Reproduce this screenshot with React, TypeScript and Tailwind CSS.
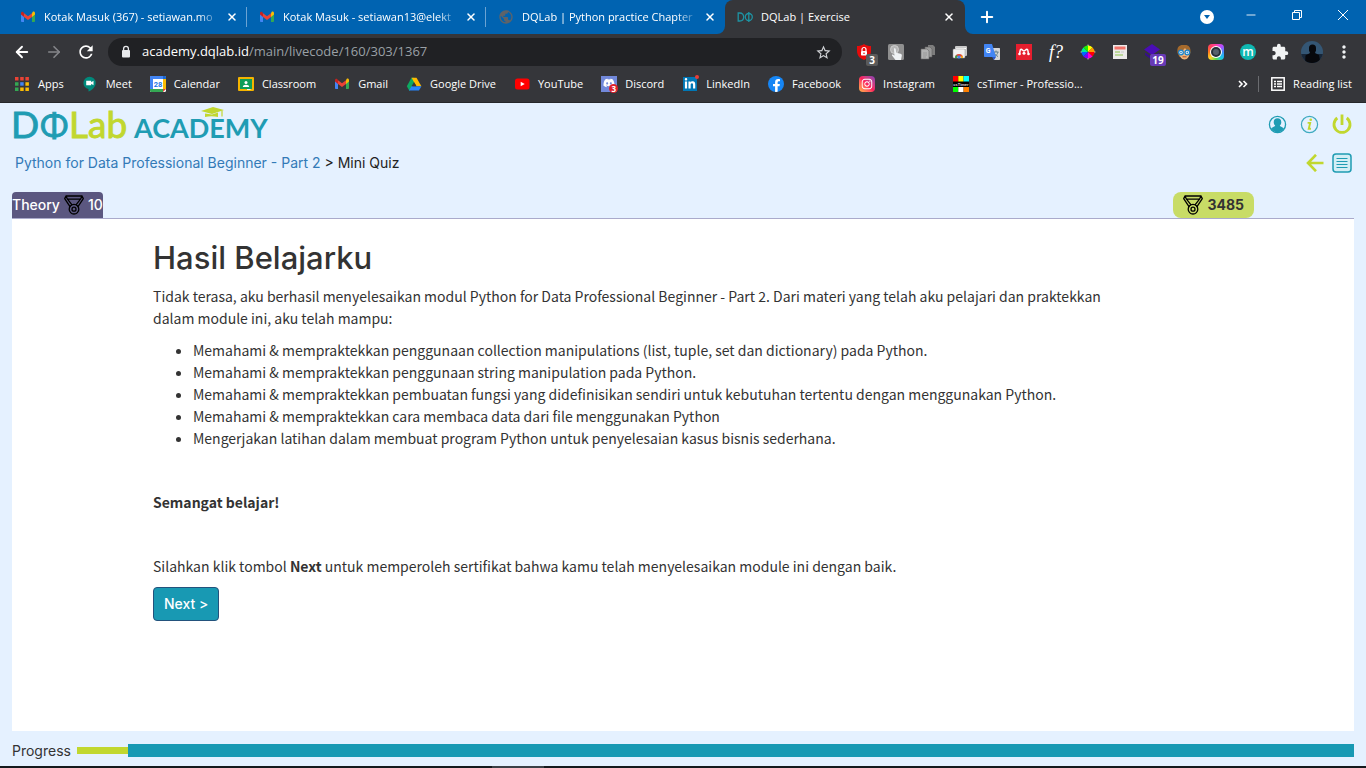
import React from "react";
import { ArrowLeft, ArrowRight, Minus, Plus, X } from "lucide-react";
import { MdExtension, MdMoreVert, MdOutlineStarBorder, MdRefresh, MdPublic } from "react-icons/md";
import { FaFacebookF, FaDiscord, FaLinkedinIn, FaInstagram } from "react-icons/fa";

type IconProps = { className?: string };

const GmailIcon = ({ className = "size-4" }: IconProps) => (
  <svg viewBox="0 0 16 16" className={className} aria-hidden="true">
    <path d="M1 4v8.2c0 .5.4.8.8.8H4V6.500z" fill="#4285f4" />
    <path d="M12 6.500V13h2.200c.4 0 .8-.3.800-.8V4z" fill="#34a853" />
    <path d="M12 4.200V7.900l3-2.300V4.200c0-1.500-1.600-2-2.400-1.200z" fill="#fbbc04" />
    <path d="M4 4.200v3.700L8 11l4-3.100V4.200L8 7.200z" fill="#ea4335" />
    <path d="M1 4.200v1.400l3 2.300V4.200L3.400 3.200C2.200 2.300 1 3 1 4.200z" fill="#c5221f" />
  </svg>
);

const AppsIcon = () => (
  <svg viewBox="0 0 16 16" className="size-4" aria-hidden="true">
    <path d="M1 1h3.500v3.500H1zM6.200 1h3.500v3.500H6.200zM11.400 1h3.500v3.500h-3.500z" fill="#ea4335" />
    <path d="M1 6.200h3.500v3.500H1zM1 11.400h3.500v3.500H1z" fill="#34a853" />
    <path d="M6.200 6.200h3.500v3.500H6.200z" fill="#4285f4" />
    <path d="M11.400 6.200h3.500v3.500h-3.500zM6.200 11.400h3.500v3.500H6.200zM11.400 11.400h3.500v3.500h-3.500z" fill="#fbbc04" />
  </svg>
);

const MeetIcon = () => (
  <svg viewBox="0 0 16 16" className="size-4" aria-hidden="true">
    <path d="M7.500.8a6.200 6.200 0 0 0-1 12.300V15.500c3.500-1.300 7.200-4.600 7.200-8.500A6.200 6.200 0 0 0 7.500.8z" fill="#00897b" />
    <path d="M4.200 4.700h5v1.600l2.300-1.600v4.600L9.200 7.700v1.600h-5z" fill="#fff" />
  </svg>
);

const CalendarIcon = () => (
  <svg viewBox="0 0 16 16" className="size-4" aria-hidden="true">
    <rect width="16" height="16" rx="1.500" fill="#fff" />
    <path d="M0 3V1.200C0 .5.500 0 1.200 0H13v3z" fill="#4285f4" />
    <path d="M0 3h3v10H0z" fill="#4285f4" />
    <path d="M13 0h1.800c.7 0 1.200.5 1.200 1.200V3h-3z" fill="#1967d2" />
    <path d="M13 3h3v10h-3z" fill="#fbbc04" />
    <path d="M0 13h13v3H1.200C.5 16 0 15.500 0 14.800z" fill="#34a853" />
    <path d="M13 13h3l-3 3z" fill="#ea4335" />
    <text x="8" y="10.800" textAnchor="middle" fontSize="7.500" fontWeight="700" fontFamily="Roboto, sans-serif" fill="#1a73e8">28</text>
  </svg>
);

const ClassroomIcon = () => (
  <svg viewBox="0 0 16 16" className="size-4" aria-hidden="true">
    <rect y="1" width="16" height="14" rx="1" fill="#f4b400" />
    <rect x="2" y="3" width="12" height="10" fill="#0f9d58" />
    <circle cx="8" cy="6.400" r="1.500" fill="#fff" />
    <path d="M4.800 11c0-1.500 1.500-2.300 3.200-2.300s3.200.8 3.200 2.300z" fill="#fff" />
    <path d="M9 13h3.500v1H9z" fill="#f1f1f1" />
  </svg>
);

const DriveIcon = () => (
  <svg viewBox="0 0 16 16" className="size-4" aria-hidden="true">
    <path d="M5.500 1.800h2.500l2.200 3.700L3.500 15 .8 10.300z" fill="#0da960" />
    <path d="M5.500 1.800h5l4.900 8.500h-5z" fill="#ffba00" />
    <path d="M5.500 10.300h9.900L13 14.600H3z" fill="#2684fc" />
    <path d="M8 6.100 5.500 10.300h5z" fill="#35363a" />
  </svg>
);

const YoutubeIcon = () => (
  <svg viewBox="0 0 16 16" className="size-4" aria-hidden="true">
    <rect x="1" y="2.500" width="14.500" height="11" rx="2.500" fill="#f00" />
    <path d="M6.700 5.700v4.600l4-2.300z" fill="#fff" />
  </svg>
);

const DiscordIcon = () => (
  <span className="relative flex size-4 items-start justify-center bg-[#7289da] pt-px text-white">
    <FaDiscord size={12} />
    <span className="absolute -bottom-px -right-px flex size-[9px] items-center justify-center rounded-full bg-[#e0202c] text-[8px] font-bold leading-none">3</span>
  </span>
);

const LinkedinIcon = () => (
  <span className="relative flex size-4 items-center justify-center">
    <span className="flex size-3.5 items-center justify-center bg-[#0077b5] text-white">
      <FaLinkedinIn size={12} />
    </span>
    <span className="absolute -right-px -top-px size-1 rounded-full bg-[#e83e37]" />
  </span>
);

const FacebookIcon = () => (
  <span className="flex size-4 items-end justify-center overflow-hidden rounded-full bg-[#1686f5] text-white">
    <FaFacebookF size={13} />
  </span>
);

const InstagramIcon = () => (
  <span className="flex size-4 items-center justify-center rounded bg-linear-to-tr from-[#fcb045] via-[#fd1d5d] to-[#833ab4] text-white">
    <FaInstagram size={12} />
  </span>
);

const TimerIcon = () => (
  <svg viewBox="0 0 16 16" className="size-4" aria-hidden="true">
    <rect width="16" height="16" fill="#000" />
    <rect width="5.300" height="5.500" fill="#f00" />
    <rect x="5.300" width="5.300" height="5.500" fill="#ff0" />
    <rect x="10.600" width="5.400" height="5.500" fill="#0ff" />
    <rect y="11" width="5.300" height="5" fill="#0f0" />
    <rect x="5.300" y="11" width="5.300" height="5" fill="#fff" />
    <rect x="10.600" y="11" width="5.400" height="5" fill="#ff8000" />
    <text x="8" y="9.800" textAnchor="middle" fontSize="4" fontWeight="700" fontFamily="Liberation Sans, sans-serif" fill="#ddd">csTimer</text>
  </svg>
);

const DqIcon = () => (
  <svg viewBox="0 0 16 16" className="size-4" fill="none" stroke="#1e93a3" strokeWidth="1.300" aria-hidden="true">
    <path d="M1.200 4v8h1.500c5.300 0 5.300-8 0-8z" />
    <circle cx="11.800" cy="8" r="3.500" />
    <path d="M11.800 3v10" />
  </svg>
);

const bookmarks: { label: string; icon: React.ReactNode }[] = [
  { label: "Apps", icon: <AppsIcon /> },
  { label: "Meet", icon: <MeetIcon /> },
  { label: "Calendar", icon: <CalendarIcon /> },
  { label: "Classroom", icon: <ClassroomIcon /> },
  { label: "Gmail", icon: <GmailIcon /> },
  { label: "Google Drive", icon: <DriveIcon /> },
  { label: "YouTube", icon: <YoutubeIcon /> },
  { label: "Discord", icon: <DiscordIcon /> },
  { label: "LinkedIn", icon: <LinkedinIcon /> },
  { label: "Facebook", icon: <FacebookIcon /> },
  { label: "Instagram", icon: <InstagramIcon /> },
  { label: "csTimer - Professio...", icon: <TimerIcon /> },
];

const extensions: { name: string; icon: React.ReactNode }[] = [
  {
    name: "Ad blocker",
    icon: (
      <span className="relative block size-4">
        <svg viewBox="0 0 16 16" className="size-4" aria-hidden="true">
          <path d="M8 0c2 1.500 4.500 2 7 2v5c0 4.500-3 7.500-7 9-4-1.500-7-4.500-7-9V2c2.500 0 5-.5 7-2z" fill="#e60b0b" />
          <rect x="5" y="7" width="6" height="4.500" rx=".8" fill="#fff" />
          <path d="M6 7V5.500a2 2 0 0 1 4 0V7" fill="none" stroke="#fff" strokeWidth="1.200" />
          <circle cx="8" cy="9.200" r=".8" fill="#e60b0b" />
        </svg>
        <span className="absolute left-2.5 top-2.5 flex h-3 w-3 items-center justify-center rounded-xs bg-[#5a5a5a] text-[10px] font-bold leading-none text-white">3</span>
      </span>
    ),
  },
  {
    name: "Click helper",
    icon: (
      <svg viewBox="0 0 16 16" className="size-4" aria-hidden="true">
        <rect width="16" height="16" rx="1.500" fill="#8f8f8f" />
        <circle cx="6.500" cy="5.500" r="4" fill="#b5b5b5" stroke="#cecece" />
        <path d="M6 4.500c1-.8 1.700 0 1.800 1l.3 3.300 4.400 1c1 .2 1.500 1 1.300 2L13 16H7.500L4 11.500c-.3-1 .8-1.300 1.600-.6l.8.8z" fill="#f0f3f5" />
      </svg>
    ),
  },
  {
    name: "Copy tabs",
    icon: (
      <svg viewBox="0 0 16 16" className="size-4" aria-hidden="true">
        <path d="M8 1h5l2 2v8H8z" fill="#7d7d7d" />
        <path d="M5 3h5l2 2v8H5z" fill="#9a9a9a" stroke="#626262" strokeWidth=".6" />
        <path d="M1 5h6l2 2v8H1z" fill="#b3b3b3" stroke="#666" strokeWidth=".6" />
        <path d="M3 9h4M3 11h4M3 13h3" stroke="#999" />
      </svg>
    ),
  },
  {
    name: "Tab windows",
    icon: (
      <svg viewBox="0 0 16 16" className="size-4" aria-hidden="true">
        <rect x="3" y="2" width="12" height="10" rx="1" fill="#c9c9c9" />
        <rect x="4" y="4" width="10" height="1" fill="#fff" />
        <rect x="1" y="5" width="12" height="9" rx="1" fill="#f2f2f2" stroke="#999" strokeWidth=".5" />
        <path d="M3 14a4 4 0 0 1 8 0H9a2 2 0 0 0-4 0z" fill="#de4535" />
        <path d="M3 14c0-1.500.6-2.500 1.400-3l1.200 1.500L5 14z" fill="#33a14c" />
        <path d="M9.700 11.200c.8.700 1.300 1.600 1.300 2.800H9z" fill="#f7bd16" />
        <circle cx="7" cy="13" r="1.500" fill="#4285f4" />
      </svg>
    ),
  },
  {
    name: "Translate",
    icon: (
      <svg viewBox="0 0 16 16" className="size-4" aria-hidden="true">
        <path d="M6 4h9c.6 0 1 .4 1 1v10c0 .6-.4 1-1 1h-5z" fill="#d6d6d6" />
        <path d="M9 8h5.500M12 6.500V8M10 8c.5 2 2 3.500 4 4.500M14 8c-.5 2-2 3.800-3.500 4.500" stroke="#607d8b" fill="none" />
        <path d="M1 0h7l4 13H1c-.6 0-1-.4-1-1V1c0-.6.400-1 1-1z" fill="#4285f4" />
        <path d="m8 13 4 0-2 3z" fill="#2a56c6" />
        <text x="1.800" y="9" fontSize="7" fontWeight="700" fontFamily="Roboto, sans-serif" fill="#fff">G</text>
      </svg>
    ),
  },
  {
    name: "Mendeley",
    icon: (
      <svg viewBox="0 0 16 16" className="size-4" aria-hidden="true">
        <rect width="16" height="16" fill="#e61e2e" />
        <path d="M3.500 9.500C4.300 8 3.600 5.500 5 5.300c1.300-.1 1.500 1.700 3 1.700s1.700-1.800 3-1.700c1.400.2.7 2.700 1.500 4.200" fill="none" stroke="#fff" strokeWidth="1.500" />
        <circle cx="3.500" cy="10" r="1.300" fill="#fff" />
        <circle cx="8" cy="9.200" r="1.500" fill="#fff" />
        <circle cx="12.500" cy="10" r="1.300" fill="#fff" />
      </svg>
    ),
  },
  { name: "Font finder", icon: <span className="font-['Liberation_Serif',serif] text-lg italic leading-none text-white">f?</span> },
  {
    name: "Color picker",
    icon: (
      <svg viewBox="0 0 16 16" className="size-4" aria-hidden="true">
        <path d="M8 0 10 3H6zM8 16l2-3H6zM0 8l3-2v4zM16 8l-3-2v4z" fill="#999" />
        <path d="M8 8V1.500a6.500 6.500 0 0 1 4.600 1.900z" fill="#ff0" />
        <path d="m8 8 4.600-4.600A6.500 6.500 0 0 1 14.500 8z" fill="#f90" />
        <path d="M8 8h6.500a6.500 6.500 0 0 1-1.900 4.600z" fill="#f00" />
        <path d="m8 8 4.600 4.600A6.500 6.500 0 0 1 8 14.500z" fill="#f0c" />
        <path d="M8 8v6.500a6.500 6.500 0 0 1-4.600-1.900z" fill="#70f" />
        <path d="m8 8-4.600 4.600A6.500 6.500 0 0 1 1.500 8z" fill="#06f" />
        <path d="M8 8H1.500a6.500 6.500 0 0 1 1.900-4.600z" fill="#0e9" />
        <path d="M8 8 3.400 3.400A6.500 6.500 0 0 1 8 1.500z" fill="#2e0" />
      </svg>
    ),
  },
  {
    name: "Notes",
    icon: (
      <svg viewBox="0 0 16 16" className="size-4" aria-hidden="true">
        <rect x="1" y="1" width="14" height="14" fill="#eceaea" />
        <path d="M2.500 2.500h11v3h-11z" fill="#f2736b" />
        <path d="M3 8h5M3 11h8" stroke="#8bc34a" strokeWidth="1.200" />
        <path d="M9 8h3" stroke="#cfcfcf" strokeWidth="1.200" />
      </svg>
    ),
  },
  {
    name: "Layers",
    icon: (
      <span className="relative block size-4">
        <svg viewBox="0 0 16 16" className="size-4" aria-hidden="true">
          <path d="m8 0 8 5.500L8 11 0 5.500z" fill="#4a0db5" />
          <path d="M1 8.500 8 13l7-4.500V11l-7 5-7-5z" fill="#35108a" />
        </svg>
        <span className="absolute left-1.5 top-2.5 flex h-3 w-4 items-center justify-center rounded-xs bg-[#673ab7] text-[10px] font-bold leading-none text-white">19</span>
      </span>
    ),
  },
  {
    name: "Face",
    icon: (
      <svg viewBox="0 0 16 16" className="size-4" aria-hidden="true">
        <path d="M1.500 9C.5 2 4 .5 8 1c4.500-.5 7 2 6.500 8l-2 4h-9z" fill="#a56a2c" />
        <path d="M3 7c3 0 5-1 6-3 1 2 3 3 4.500 3 .5 5.500-2 8.500-5 8.500S3 12.500 3 7z" fill="#f0b57a" />
        <circle cx="5" cy="8.500" r="2.300" fill="#fff" stroke="#1683cf" strokeWidth="1.300" />
        <circle cx="11.300" cy="8.500" r="2.300" fill="#fff" stroke="#1683cf" strokeWidth="1.300" />
        <circle cx="5" cy="8.500" r=".9" fill="#2b86c5" />
        <circle cx="11.300" cy="8.500" r=".9" fill="#2b86c5" />
        <path d="M6.500 12.800h4" stroke="#a34b2d" />
      </svg>
    ),
  },
  {
    name: "Camera",
    icon: (
      <span className="flex size-4 items-center justify-center rounded-sm bg-[conic-gradient(#ff3ea5,#b44cff,#3f8cff,#19c8e8,#57dc4b,#ffd42a,#ff7a1a,#ff3e5f,#ff3ea5)]">
        <span className="flex size-3 items-center justify-center rounded-full bg-white">
          <span className="size-2.5 rounded-full border-2 border-[#26303a] bg-[#56616c]" />
        </span>
      </span>
    ),
  },
  { name: "Momentum", icon: <span className="flex size-4 items-center justify-center rounded-full bg-[#0fb8b2] pb-px text-xs font-semibold leading-none text-white">m</span> },
  { name: "Extensions", icon: <MdExtension size={18} color="#f1f3f4" /> },
  {
    name: "Profile",
    icon: (
      <svg viewBox="0 0 22 22" className="size-[22px] rounded-full" aria-hidden="true">
        <rect width="22" height="22" fill="#345674" />
        <path d="M0 13h22v9H0z" fill="#172638" />
        <path d="M8 7a3.500 3.500 0 0 1 7 0v2.500l-1 2.500 4 2 1.500 8H4l.5-7.500L9 12 8 9.500z" fill="#07080c" />
      </svg>
    ),
  },
  { name: "Menu", icon: <MdMoreVert size={20} color="#f1f3f4" /> },
];

const tabs: { title: string; icon: React.ReactNode; divider: boolean }[] = [
  { title: "Kotak Masuk (367) - setiawan.mo", icon: <GmailIcon />, divider: true },
  { title: "Kotak Masuk - setiawan13@elekt", icon: <GmailIcon />, divider: true },
  { title: "DQLab | Python practice Chapter", icon: <MdPublic size={16} color="#5f6368" />, divider: false },
];

function BrowserTabs() {
  return (
    <div className="flex h-[34px] bg-[#0063b1] pl-2 text-[11px] text-white">
      {tabs.map((tab) => (
        <div key={tab.title} className="flex w-[239px] items-center">
          <div className="flex min-w-0 flex-1 items-center gap-2 pl-3">
            <span className="shrink-0">{tab.icon}</span>
            <span className="flex-1 overflow-hidden whitespace-nowrap [mask-image:linear-gradient(to_right,black_88%,transparent)]">{tab.title}</span>
          </div>
          <button aria-label="Close tab" className="ml-1 mr-1.5 flex size-4 items-center justify-center">
            <X size={12} strokeWidth={3} />
          </button>
          <span className={tab.divider ? "h-5 w-px bg-[#6ba3d3]" : "h-5 w-px"} />
        </div>
      ))}
      <div className="relative flex w-60 items-center rounded-t-lg bg-[#35363a]">
        <svg viewBox="0 0 8 8" className="absolute -left-2 bottom-0 size-2" aria-hidden="true"><path d="M8 0v8H0a8 8 0 0 0 8-8z" fill="#35363a" /></svg>
        <svg viewBox="0 0 8 8" className="absolute -right-2 bottom-0 size-2" aria-hidden="true"><path d="M0 0v8h8a8 8 0 0 1-8-8z" fill="#35363a" /></svg>
        <div className="flex flex-1 items-center gap-2 pl-3">
          <DqIcon />
          <span>DQLab | Exercise</span>
        </div>
        <button aria-label="Close tab" className="mr-2 flex size-4 items-center justify-center">
          <X size={12} strokeWidth={3} />
        </button>
      </div>
      <button aria-label="New tab" className="ml-3 flex w-5 items-center justify-center">
        <Plus size={18} strokeWidth={2.6} />
      </button>
      <div className="ml-auto flex">
        <button aria-label="Search tabs" className="flex w-[42px] items-center justify-center">
          <span className="flex size-3.5 items-center justify-center rounded-full bg-white">
            <svg viewBox="0 0 6 4" className="h-1 w-1.5" aria-hidden="true"><path d="M0 0h6L3 4z" fill="#0063b1" /></svg>
          </span>
        </button>
        <button aria-label="Minimize" className="flex h-[30px] w-[46px] items-center justify-center">
          <Minus size={14} strokeWidth={1.5} />
        </button>
        <button aria-label="Restore" className="flex h-[30px] w-[46px] items-center justify-center">
          <svg viewBox="0 0 10 10" className="size-2.5" fill="none" stroke="currentColor" aria-hidden="true"><path d="M.5 2.500h7v7h-7zM2.500 2.500v-2h7v7h-2" /></svg>
        </button>
        <button aria-label="Close window" className="flex h-[30px] w-[46px] items-center justify-center">
          <svg viewBox="0 0 10 10" className="size-2.5" stroke="currentColor" aria-hidden="true"><path d="m0 0 10 10M10 0 0 10" /></svg>
        </button>
      </div>
    </div>
  );
}

function BrowserToolbar() {
  return (
    <div className="flex h-9 items-center bg-[#35363a] px-1.5 text-white">
      <button aria-label="Back" className="flex w-8 justify-center"><ArrowLeft size={18} strokeWidth={2.5} /></button>
      <button aria-label="Forward" className="flex w-8 justify-center text-[#85868a]"><ArrowRight size={18} strokeWidth={2.2} /></button>
      <button aria-label="Reload" className="flex w-8 justify-center"><MdRefresh size={20} /></button>
      <div className="mx-1.5 flex h-7 flex-1 items-center rounded-full bg-[#202124] pl-2.5 pr-2.5 text-[13px]">
        <svg viewBox="0 0 16 16" className="size-4" aria-hidden="true">
          <rect x="4" y="6" width="8" height="7.500" rx="1" fill="#e8eaed" />
          <path d="M5.600 6.500V4.800a2.400 2.400 0 0 1 4.800 0v1.700" fill="none" stroke="#e8eaed" strokeWidth="1.300" />
        </svg>
        <a href="#address" className="ml-2 flex-1 text-white">
          academy.dqlab.id<span className="text-[#9aa0a6]">/main/livecode/160/303/1367</span>
        </a>
        <MdOutlineStarBorder size={17} color="#d0d2d5" />
      </div>
      {extensions.map((ext) => (
        <button key={ext.name} aria-label={ext.name} className="flex w-8 shrink-0 items-center justify-center">{ext.icon}</button>
      ))}
    </div>
  );
}

function BookmarksBar() {
  return (
    <nav aria-label="Bookmarks" className="flex h-[33px] items-center border-b border-[#26272a] bg-[#35363a] pb-1 pl-3.5 pr-3.5 text-[11px] text-white">
      <div className="flex flex-1 items-center gap-[18px] whitespace-nowrap">
        {bookmarks.map((b) => (
          <a key={b.label} href="#bookmark" className="flex items-center gap-2">
            <span className="shrink-0">{b.icon}</span>
            {b.label}
          </a>
        ))}
      </div>
      <button aria-label="More bookmarks" className="mr-2.5 flex">
        <svg viewBox="0 0 10 8" className="h-2 w-2.5" fill="none" stroke="#fff" strokeWidth="1.600" aria-hidden="true"><path d="m1 1 3 3-3 3M5.500 1l3 3-3 3" /></svg>
      </button>
      <span className="h-4 w-px bg-[#6b6c70]" />
      <button className="ml-3 flex items-center gap-2 whitespace-nowrap">
        <svg viewBox="0 0 14 14" className="size-3.5" fill="none" stroke="#fff" aria-hidden="true">
          <rect x=".8" y=".8" width="12.400" height="12.400" strokeWidth="1.500" />
          <path d="M3 4.500h2M6 4.500h5M3 7h2M6 7h5M3 9.500h2M6 9.500h5" strokeWidth="1.300" />
        </svg>
        Reading list
      </button>
    </nav>
  );
}

const Medal = () => (
  <svg viewBox="0 0 20 20" className="size-5" fill="none" stroke="#000" strokeWidth="1.300" strokeLinejoin="round" strokeLinecap="round" aria-hidden="true">
    <path d="M2 1h16l-1.500 3.200h-13zM2 1 .7 3.600l5.300 8M18 1l1.300 2.600-5.300 8M3.500 4.200l4.300 5.400M16.500 4.200l-4.300 5.400" />
    <circle cx="10" cy="14.200" r="4.800" />
    <circle cx="10" cy="14.200" r="2" />
  </svg>
);

const Logo = () => (
  <svg viewBox="0 0 260 36" className="h-9 w-[260px] overflow-visible" role="img" aria-label="DQLab Academy" fontFamily="Lato, sans-serif">
    <text x="-1" y="32" fontSize="37" fill="#1f9cb3" stroke="#1f9cb3" strokeWidth=".9">
      D<tspan fontFamily="Inter, sans-serif" fontSize="34">Φ</tspan><tspan fill="#c1d72f" stroke="#c1d72f">Lab</tspan>
    </text>
    <text x="122" y="32" fontSize="27" fontWeight="700" fill="#1f9cb3">ACADEMY</text>
    <path d="m189 5 12-4 11 3-12 4z" fill="#c1d72f" />
    <path d="M193 7.500v3.500c4-1 9-1 13 0V6.500l-6 2z" fill="#c1d72f" />
    <path d="M210 4.500v6" stroke="#c1d72f" strokeWidth="1.200" />
  </svg>
);

function PageHeader() {
  return (
    <header className="pl-3 pr-3.5">
      <div className="flex h-[42px] items-center justify-between">
        <a href="#home"><Logo /></a>
        <div className="flex items-center gap-[13px]">
          <button aria-label="Profile">
            <svg viewBox="0 0 20 20" className="size-[19px]" aria-hidden="true">
              <circle cx="10" cy="10" r="8.500" fill="none" stroke="#1f9cb3" strokeWidth="1.400" />
              <path d="M10 3.500c-2.500 0-4 1.700-4 4 0 1.600.7 2.900 1.600 3.600-.2 1.200-2.600 1.400-4.300 2.900A8.500 8.500 0 0 0 10 18.500a8.500 8.500 0 0 0 6.700-4.500c-1.700-1.500-4.100-1.700-4.300-2.900.9-.7 1.600-2 1.600-3.600 0-2.300-1.500-4-4-4z" fill="#1f9cb3" />
            </svg>
          </button>
          <button aria-label="Information">
            <svg viewBox="0 0 20 20" className="size-[19px]" fill="none" aria-hidden="true">
              <circle cx="10" cy="10" r="8.500" stroke="#3fabc0" strokeWidth="1.300" />
              <circle cx="11.300" cy="5" r="1.400" fill="#c1d72f" />
              <path d="M8 8.300h2.700L9.200 14.500h2.300" stroke="#c1d72f" strokeWidth="2" />
            </svg>
          </button>
          <button aria-label="Log out">
            <svg viewBox="0 0 20 20" className="size-5" fill="none" stroke="#c1d72f" strokeWidth="2.800" aria-hidden="true">
              <path d="M10 .5V11M5.300 4A8 8 0 1 0 14.700 4" />
            </svg>
          </button>
        </div>
      </div>
      <div className="flex h-9 items-center justify-between">
        <div className="pl-[3px] text-sm">
          <a href="#module" className="text-[#337ab7]">Python for Data Professional Beginner - Part 2</a>
          <span className="text-[#222]"> &gt; Mini Quiz</span>
        </div>
        <div className="flex items-center gap-2">
          <button aria-label="Previous page">
            <svg viewBox="0 0 18 18" className="size-[18px]" fill="none" stroke="#c1d72f" strokeWidth="2.600" aria-hidden="true">
              <path d="M10 .8 2 9l8 8.200M2 9h15.500" />
            </svg>
          </button>
          <button aria-label="Module contents">
            <svg viewBox="0 0 20 20" className="size-5" fill="none" stroke="#1f9cb3" aria-hidden="true">
              <rect x="1" y="1" width="18" height="18" rx="3" strokeWidth="1.500" fill="#d3eef5" />
              <path d="M4.500 5.500h11M4.500 8.500h11M4.500 11.500h11M4.500 14.500h11" />
            </svg>
          </button>
        </div>
      </div>
    </header>
  );
}

const outcomes = [
  "Memahami & mempraktekkan penggunaan collection manipulations (list, tuple, set dan dictionary) pada Python.",
  "Memahami & mempraktekkan penggunaan string manipulation pada Python.",
  "Memahami & mempraktekkan pembuatan fungsi yang didefinisikan sendiri untuk kebutuhan tertentu dengan menggunakan Python.",
  "Memahami & mempraktekkan cara membaca data dari file menggunakan Python",
  "Mengerjakan latihan dalam membuat program Python untuk penyelesaian kasus bisnis sederhana.",
];

function Lesson() {
  return (
    <main className="mx-3 flex-1 bg-white pb-10 pl-[141px] pr-5 pt-[22px] text-[#333]">
      <div className="max-w-[980px]">
        <h1 className="text-[31px] font-medium leading-[34px]">Hasil Belajarku</h1>
        <div className="mt-2.5 font-['Noto_Sans_CJK_SC',sans-serif] text-sm leading-[22px]">
          <p>
            Tidak terasa, aku berhasil menyelesaikan modul Python for Data Professional Beginner - Part 2. Dari materi yang telah aku pelajari dan praktekkan dalam module ini, aku telah mampu:
          </p>
          <ul className="mt-2.5 list-disc pl-10">
            {outcomes.map((item) => <li key={item}>{item}</li>)}
          </ul>
          <p className="mt-[42px] font-bold">Semangat belajar!</p>
          <p className="mt-[42px]">
            Silahkan klik tombol <strong>Next</strong> untuk memperoleh sertifikat bahwa kamu telah menyelesaikan module ini dengan baik.
          </p>
        </div>
        <button className="mt-2.5 h-[34px] rounded border border-[#23527c] bg-[#1899b3] px-2.5 text-sm font-medium text-white">Next &gt;</button>
      </div>
    </main>
  );
}

export default function App() {
  return (
    <div className="flex min-h-screen flex-col bg-[#e5f1ff] font-['Open_Sans',sans-serif]">
      <div>
        <BrowserTabs />
        <BrowserToolbar />
        <BookmarksBar />
      </div>
      <div className="flex flex-1 flex-col font-['Inter',sans-serif]">
        <PageHeader />
        <div className="mx-3 mt-[11px] flex items-center justify-between border-b border-[#aaaacb] text-sm">
          <div className="flex h-[26px] items-center gap-1 rounded-t bg-[#5b5780] font-medium text-white">
            Theory <Medal /> 10
          </div>
          <div className="mr-[100px] flex h-[26px] items-center gap-1 rounded-lg bg-[#c8dc66] px-2.5 font-bold text-[#333]">
            <Medal /> 3485
          </div>
        </div>
        <Lesson />
        <footer className="flex h-[35px] items-center px-3 pt-1 text-sm text-[#333]">
          <span id="progress-label" className="mr-1.5">Progress</span>
          <div role="progressbar" aria-labelledby="progress-label" aria-valuenow={4} aria-valuemin={0} aria-valuemax={100} className="flex flex-1 items-center">
            <div className="h-[7px] w-[4%] bg-[#c1d72f]" />
            <div className="h-[13px] flex-1 bg-[#1899b3]" />
          </div>
        </footer>
      </div>
      <div className="flex h-0.5 bg-[#15191d]">
        <span className="ml-[36%] w-[52px] bg-[#3b4046]" />
      </div>
    </div>
  );
}
